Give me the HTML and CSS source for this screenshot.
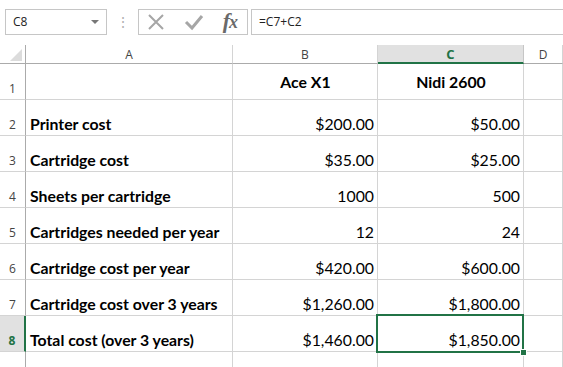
FILE: index.html
```html
<!DOCTYPE html>
<html lang="en">
<head>
    <meta charset="UTF-8">
    <title>Printer costs</title>
    <link rel="stylesheet" href="styles.css">
</head>
<body>
    <div class="formula-bar">
        <div class="name-box">
            <span>C8</span>
            <span class="caret"></span>
        </div>
        <div class="grip">&#8942;</div>
        <div class="fx-box">
            <svg width="18" height="18" viewBox="0 0 18 18"><path d="M2 2 L16 16 M16 2 L2 16" stroke="#a6a6a6" stroke-width="2" fill="none"/></svg>
            <svg width="20" height="18" viewBox="0 0 20 18"><path d="M2 9 L8 15 L18 3" stroke="#a6a6a6" stroke-width="3" fill="none"/></svg>
            <span class="fx">f<i>x</i></span>
        </div>
        <div class="formula">=C7+C2</div>
    </div>

    <div class="sheet">
        <!-- column headers -->
        <div class="corner"><span class="tri"></span></div>
        <div class="col-head">A</div>
        <div class="col-head">B</div>
        <div class="col-head active">C</div>
        <div class="col-head">D</div>

        <div class="row-head">1</div>
        <div class="cell"></div>
        <div class="cell title">Ace X1</div>
        <div class="cell title">Nidi 2600</div>
        <div class="cell"></div>

        <div class="row-head">2</div>
        <div class="cell label">Printer cost</div>
        <div class="cell num">$200.00</div>
        <div class="cell num">$50.00</div>
        <div class="cell"></div>

        <div class="row-head">3</div>
        <div class="cell label">Cartridge cost</div>
        <div class="cell num">$35.00</div>
        <div class="cell num">$25.00</div>
        <div class="cell"></div>

        <div class="row-head">4</div>
        <div class="cell label">Sheets per cartridge</div>
        <div class="cell num">1000</div>
        <div class="cell num">500</div>
        <div class="cell"></div>

        <div class="row-head">5</div>
        <div class="cell label">Cartridges needed per year</div>
        <div class="cell num">12</div>
        <div class="cell num">24</div>
        <div class="cell"></div>

        <div class="row-head">6</div>
        <div class="cell label">Cartridge cost per year</div>
        <div class="cell num">$420.00</div>
        <div class="cell num">$600.00</div>
        <div class="cell"></div>

        <div class="row-head">7</div>
        <div class="cell label">Cartridge cost over 3 years</div>
        <div class="cell num">$1,260.00</div>
        <div class="cell num">$1,800.00</div>
        <div class="cell"></div>

        <div class="row-head active">8</div>
        <div class="cell label">Total cost (over 3 years)</div>
        <div class="cell num">$1,460.00</div>
        <div class="cell num selected">$1,850.00<span class="handle"></span></div>
        <div class="cell"></div>

        <div class="row-head"></div>
        <div class="cell"></div>
        <div class="cell"></div>
        <div class="cell"></div>
        <div class="cell"></div>
    </div>
</body>
</html>
```

FILE: styles.css
```css
body {
    margin: 0;
    background: #fff;
    font-family: Lato, "Liberation Sans", sans-serif;
    width: 563px;
    height: 367px;
    overflow: hidden;
}

/* formula bar */
.formula-bar {
    display: flex;
    align-items: center;
    height: 25px;
    padding-top: 9px;
    padding-left: 5px;
    margin-bottom: 11px;
}
.name-box {
    box-sizing: border-box;
    width: 102px;
    height: 26px;
    border: 1px solid #c6c6c6;
    display: flex;
    align-items: center;
    justify-content: space-between;
    padding: 0 7px 0 7px;
    font-family: "Open Sans", sans-serif;
    font-size: 12px;
    color: #222;
}
.caret {
    width: 0;
    height: 0;
    border-left: 4px solid transparent;
    border-right: 4px solid transparent;
    border-top: 4px solid #777;
}
.grip {
    width: 31px;
    text-align: center;
    color: #b0b0b0;
    font-size: 14px;
}
.fx-box {
    box-sizing: border-box;
    width: 110px;
    height: 26px;
    border: 1px solid #c6c6c6;
    display: flex;
    align-items: center;
    justify-content: space-between;
    padding: 0 10px 0 8px;
}
.fx {
    font-family: "Liberation Serif", serif;
    font-style: italic;
    font-size: 22px;
    font-weight: bold;
    color: #6a6a6a;
    letter-spacing: -1px;
    line-height: 20px;
}
.fx i {
    font-size: 18px;
}
.formula {
    box-sizing: border-box;
    flex: 1;
    height: 26px;
    margin-left: 3px;
    border: 1px solid #c6c6c6;
    border-right: none;
    padding-left: 7px;
    display: flex;
    align-items: center;
    font-family: "Open Sans", sans-serif;
    font-size: 12px;
    color: #222;
}

/* sheet grid */
.sheet {
    display: grid;
    grid-template-columns: 26px 207px 145px 146px 1fr;
    grid-template-rows: 19px 36px repeat(7, 36px) 20px;
}
.sheet > div {
    box-sizing: border-box;
    border-right: 1px solid #d4d4d4;
    border-bottom: 1px solid #d4d4d4;
}
.corner {
    position: relative;
    border-right-color: #ababab !important;
    border-bottom-color: #ababab !important;
}
.tri {
    position: absolute;
    right: 3px;
    bottom: 2px;
    width: 0;
    height: 0;
    border-left: 12px solid transparent;
    border-bottom: 12px solid #dcdcdc;
}
.col-head {
    border-bottom-color: #ababab !important;
    text-align: center;
    font-family: "Open Sans", sans-serif;
    font-size: 12px;
    color: #444;
    line-height: 19px;
}
.col-head.active {
    background: #e1e1e1;
    color: #217346;
    font-weight: bold;
    font-size: 13px;
    border-bottom: 2px solid #217346 !important;
    border-right-color: #c6c6c6;
}
.row-head {
    border-right-color: #ababab !important;
    font-family: "Open Sans", sans-serif;
    font-size: 12px;
    color: #444;
    text-align: center;
    display: flex;
    align-items: flex-end;
    justify-content: center;
    padding-bottom: 2px;
}
.row-head.active {
    background: #e1e1e1;
    color: #217346;
    font-weight: bold;
    border-right: 2px solid #217346 !important;
}
.cell {
    font-size: 15.8px;
    line-height: 18px;
    color: #000;
    display: flex;
    align-items: flex-end;
    padding: 0 3px 2px 4px;
    white-space: nowrap;
}
.label {
    font-weight: bold;
}
.num {
    justify-content: flex-end;
}
.title {
    font-weight: bold;
    align-items: center;
    justify-content: center;
    padding-bottom: 0;
}
.selected {
    position: relative;
}
.selected::after {
    content: "";
    position: absolute;
    left: -2px;
    top: -2px;
    right: -1px;
    bottom: -2px;
    border: 2px solid #217346;
}
.handle {
    position: absolute;
    right: -4px;
    bottom: -5px;
    width: 5px;
    height: 5px;
    background: #217346;
    border: 1px solid #fff;
    z-index: 1;
}
```
